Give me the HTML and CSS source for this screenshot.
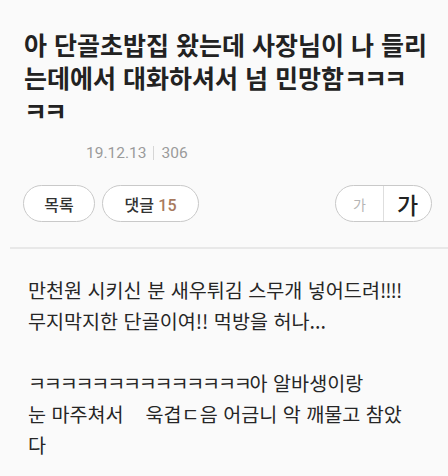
FILE: index.html
```html
<!DOCTYPE html>
<html lang="ko">
<head>
    <meta charset="UTF-8">
    <meta name="viewport" content="width=device-width, initial-scale=1.0">
    <title>단골초밥집</title>
    <link rel="stylesheet" href="styles.css">
</head>
<body>
<div class="post-head">
    <h1 class="title">아 단골초밥집 왔는데 사장님이 나 들리<br>는데에서 대화하셔서 넘 민망함<span class="kk">ㅋㅋㅋ</span><br><span class="kk">ㅋㅋ</span></h1>
    <div class="meta">
        <span>19.12.13</span>
        <span class="sep"></span>
        <span>306</span>
    </div>
    <div class="actions">
        <button class="pill list-btn">목록</button>
        <button class="pill reply-btn">댓글 <span class="count">15</span></button>
        <div class="font-size">
            <button class="small">가</button>
            <button class="big">가</button>
        </div>
    </div>
</div>
<hr class="divider">
<div class="post-body">
    <p>만천원 시키신 분 새우튀김 스무개 넣어드려<span class="bang">!!!!</span><br>무지막지한 단골이여!! 먹방을 허나...</p>
    <p class="blank"></p>
    <p><span class="kk">ㅋㅋㅋㅋㅋㅋㅋㅋㅋㅋㅋㅋㅋㅋ</span>아 알바생이랑<br>눈 마주쳐서    욱겹ㄷ음 어금니 악 깨물고 참았<br>다</p>
</div>
</body>
</html>
```
FILE: styles.css
```css
body {
    margin: 0;
    background-color: #fafafa;
    color: #222;
    font-family: "Noto Sans CJK KR", "Noto Sans", sans-serif;
}
.post-head {
    padding: 28px 10px 0 24px;
}
.title {
    margin: 0;
    font-size: 25px;
    line-height: 33px;
    font-weight: 700;
    color: #222;
    white-space: nowrap;
}
.title .kk {
    letter-spacing: -3px;
}
.meta {
    margin: 16px 0 0 62px;
    display: flex;
    align-items: center;
    gap: 7px;
    height: 20px;
    font-family: Roboto, "Noto Sans CJK KR", sans-serif;
    font-size: 15.5px;
    color: #9a9a9a;
}
.sep {
    width: 1px;
    height: 14px;
    background-color: #d6d6d6;
}
.actions {
    margin-top: 22px;
    display: flex;
    align-items: center;
    gap: 7px;
    padding-right: 6px;
}
.pill {
    height: 37px;
    border: 1px solid #c9c9c9;
    border-radius: 19px;
    background-color: #fff;
    font-family: "Noto Sans CJK KR", sans-serif;
    font-size: 16px;
    font-weight: 500;
    color: #333;
    padding: 0;
}
.list-btn {
    width: 72px;
    margin-left: -1px;
}
.reply-btn {
    width: 97px;
}
.count {
    color: #a87a5e;
    font-family: Roboto, sans-serif;
    font-weight: 500;
}
.font-size {
    margin-left: auto;
    display: flex;
    width: 97px;
    height: 37px;
    border: 1px solid #c9c9c9;
    border-radius: 19px;
    background-color: #fff;
    overflow: hidden;
    box-sizing: border-box;
}
.font-size button {
    flex: 1;
    border: none;
    background: none;
    padding: 0;
    font-family: "Noto Sans CJK KR", sans-serif;
}
.font-size .small {
    font-size: 14px;
    color: #b5b5b5;
    border-right: 1px solid #dedede;
}
.font-size .big {
    font-size: 23px;
    font-weight: 500;
    color: #222;
}
.divider {
    margin: 25px 0 0 10px;
    border: none;
    height: 2px;
    background-color: #e8e8e8;
}
.post-body {
    padding: 25px 10px 0 28px;
}
.post-body p {
    margin: 0;
    font-size: 19.6px;
    line-height: 31px;
    color: #262626;
    white-space: pre;
}
.post-body .kk {
    letter-spacing: -2.2px;
}
.post-body .bang {
    letter-spacing: -1px;
}
.post-body .blank {
    height: 31px;
}
```
